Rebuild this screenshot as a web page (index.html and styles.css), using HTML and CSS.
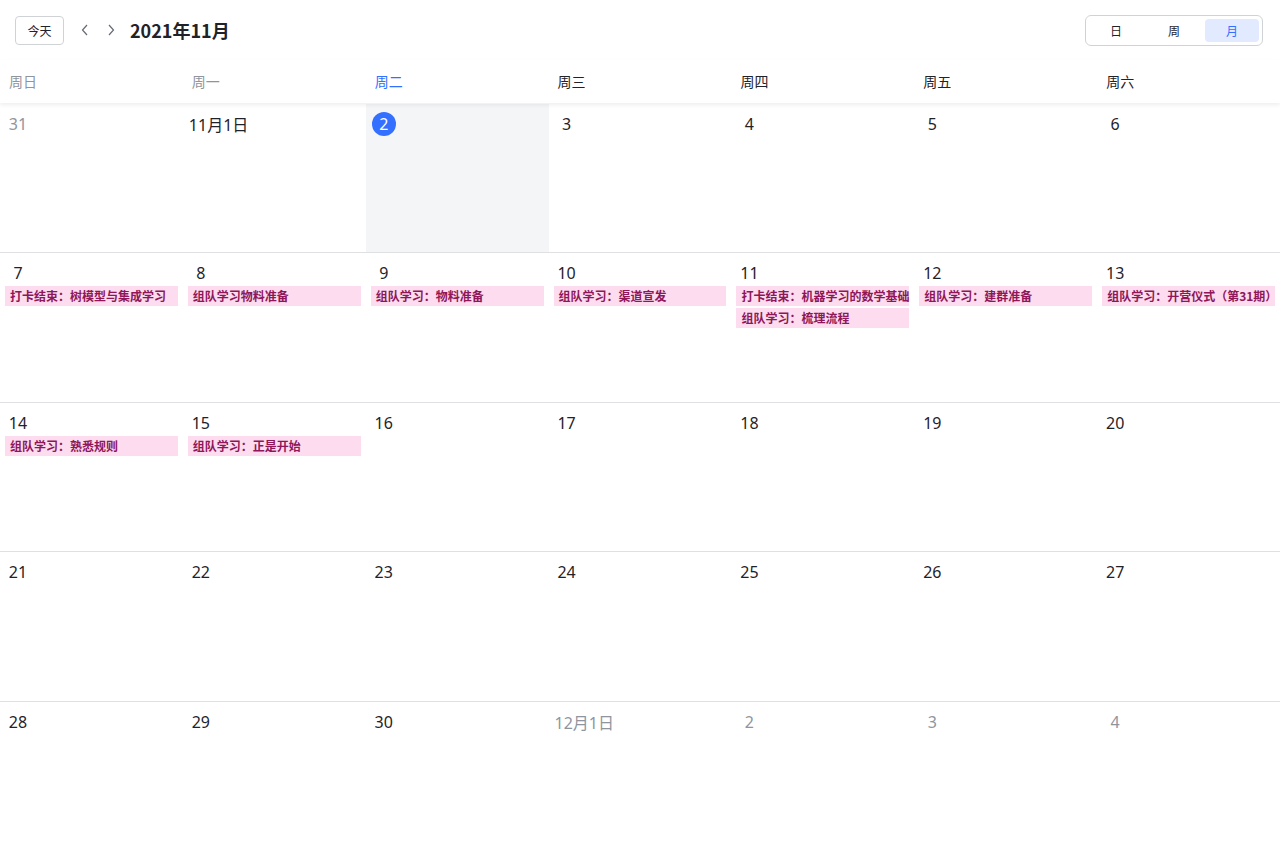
FILE: index.html
```html
<!DOCTYPE html>
<html lang="zh-CN">
<head>
<meta charset="utf-8">
<title>日历</title>
<link rel="stylesheet" href="styles.css">
</head>
<body>
<div class="cal">
  <div class="toolbar">
    <div class="tb-left">
      <button class="today-btn">今天</button>
      <span class="nav">
        <svg width="10" height="12" viewBox="0 0 10 12"><path d="M7 1 L2.5 6 L7 11" fill="none" stroke="#646a73" stroke-width="1.2"/></svg>
      </span>
      <span class="nav">
        <svg width="10" height="12" viewBox="0 0 10 12"><path d="M3 1 L7.5 6 L3 11" fill="none" stroke="#646a73" stroke-width="1.2"/></svg>
      </span>
      <h1 class="title">2021年11月</h1>
    </div>
    <div class="switch">
      <span class="sw">日</span>
      <span class="sw">周</span>
      <span class="sw active">月</span>
    </div>
  </div>
  <div class="weekhead">
    <div class="wd past">周日</div>
    <div class="wd past">周一</div>
    <div class="wd cur">周二</div>
    <div class="wd">周三</div>
    <div class="wd">周四</div>
    <div class="wd">周五</div>
    <div class="wd">周六</div>
  </div>
  <div class="grid">
    <div class="row">
      <div class="cell"><span class="num other">31</span></div>
      <div class="cell"><span class="num">11月1日</span></div>
      <div class="cell todaycell"><span class="num today">2</span></div>
      <div class="cell"><span class="num">3</span></div>
      <div class="cell"><span class="num">4</span></div>
      <div class="cell"><span class="num">5</span></div>
      <div class="cell"><span class="num">6</span></div>
    </div>
    <div class="row">
      <div class="cell"><span class="num">7</span><div class="ev">打卡结束：树模型与集成学习</div></div>
      <div class="cell"><span class="num">8</span><div class="ev">组队学习物料准备</div></div>
      <div class="cell"><span class="num">9</span><div class="ev">组队学习：物料准备</div></div>
      <div class="cell"><span class="num">10</span><div class="ev">组队学习：渠道宣发</div></div>
      <div class="cell"><span class="num">11</span><div class="ev">打卡结束：机器学习的数学基础</div><div class="ev">组队学习：梳理流程</div></div>
      <div class="cell"><span class="num">12</span><div class="ev">组队学习：建群准备</div></div>
      <div class="cell"><span class="num">13</span><div class="ev">组队学习：开营仪式（第31期）</div></div>
    </div>
    <div class="row">
      <div class="cell"><span class="num">14</span><div class="ev">组队学习：熟悉规则</div></div>
      <div class="cell"><span class="num">15</span><div class="ev">组队学习：正是开始</div></div>
      <div class="cell"><span class="num">16</span></div>
      <div class="cell"><span class="num">17</span></div>
      <div class="cell"><span class="num">18</span></div>
      <div class="cell"><span class="num">19</span></div>
      <div class="cell"><span class="num">20</span></div>
    </div>
    <div class="row">
      <div class="cell"><span class="num">21</span></div>
      <div class="cell"><span class="num">22</span></div>
      <div class="cell"><span class="num">23</span></div>
      <div class="cell"><span class="num">24</span></div>
      <div class="cell"><span class="num">25</span></div>
      <div class="cell"><span class="num">26</span></div>
      <div class="cell"><span class="num">27</span></div>
    </div>
    <div class="row">
      <div class="cell"><span class="num">28</span></div>
      <div class="cell"><span class="num">29</span></div>
      <div class="cell"><span class="num">30</span></div>
      <div class="cell"><span class="num other">12月1日</span></div>
      <div class="cell"><span class="num other">2</span></div>
      <div class="cell"><span class="num other">3</span></div>
      <div class="cell"><span class="num other">4</span></div>
    </div>
  </div>
</div>
</body>
</html>
```
FILE: styles.css
```css
* { box-sizing: border-box; }
html, body { margin: 0; padding: 0; background: #fff; }
body {
  font-family: "Noto Sans", "Noto Sans CJK SC", sans-serif;
  color: #1f2329;
  overflow: hidden;
  width: 1280px;
  height: 850px;
}
.cal {
  width: 1280px;
  height: 850px;
  display: flex;
  flex-direction: column;
}
.toolbar {
  height: 60px;
  flex: none;
  display: flex;
  align-items: center;
  justify-content: space-between;
  padding: 0 17px 0 15px;
}
.tb-left {
  display: flex;
  align-items: center;
}
.today-btn {
  width: 49px;
  height: 29px;
  border: 1px solid #d0d3d6;
  border-radius: 4px;
  background: #fff;
  font-family: "Noto Sans CJK SC", sans-serif;
  font-size: 12px;
  color: #1f2329;
  padding: 0;
  margin-right: 13px;
}
.nav {
  width: 16px;
  height: 16px;
  display: flex;
  align-items: center;
  justify-content: center;
  margin-right: 10px;
}
.nav:last-of-type { margin-right: 11px; }
.title {
  margin: 0;
  font-family: "Noto Sans CJK SC", sans-serif;
  font-size: 18px;
  font-weight: 700;
  color: #1f2329;
  line-height: 1;
}
.switch {
  display: flex;
  gap: 4px;
  padding: 3px;
  border: 1px solid #d0d3d6;
  border-radius: 6px;
  height: 31px;
}
.sw {
  width: 54px;
  height: 23px;
  display: flex;
  align-items: center;
  justify-content: center;
  font-family: "Noto Sans CJK SC", sans-serif;
  font-size: 12px;
  color: #1f2329;
  border-radius: 4px;
}
.sw.active {
  background: #e1eaff;
  color: #3370ff;
}
.weekhead {
  height: 43px;
  flex: none;
  display: grid;
  grid-template-columns: repeat(7, 1fr);
  box-shadow: 0 2px 4px rgba(31, 35, 41, 0.08);
  position: relative;
  z-index: 1;
}
.wd {
  padding: 11px 0 0 9px;
  font-family: "Noto Sans CJK SC", sans-serif;
  font-size: 14px;
  color: #1f2329;
}
.wd.past { color: #8f959e; }
.wd.cur { color: #3370ff; }
.grid {
  flex: 1;
  display: grid;
  grid-template-rows: repeat(5, 1fr);
}
.row {
  display: grid;
  grid-template-columns: repeat(7, 1fr);
  border-top: 1px solid #dee0e3;
}
.row:first-child { border-top: none; padding-top: 1px; }
.cell {
  padding: 8px 5px 0;
  display: flex;
  flex-direction: column;
  align-items: flex-start;
  gap: 2px;
  min-width: 0;
}
.todaycell { background: #f4f5f7; }
.num {
  min-width: 24px;
  height: 24px;
  margin-left: 1px;
  display: inline-flex;
  align-items: center;
  justify-content: center;
  font-family: "Noto Sans", "Noto Sans CJK SC", sans-serif;
  font-size: 16px;
  color: #1f2329;
  margin-bottom: -1px;
}
.num.other { color: #8f959e; }
.num.today {
  background: #3370ff;
  color: #fff;
  border-radius: 50%;
}
.ev {
  align-self: stretch;
  height: 20px;
  background: #fddcef;
  color: #8e1659;
  font-family: "Noto Sans CJK SC", sans-serif;
  font-size: 12px;
  font-weight: 700;
  line-height: 20px;
  padding: 0 0 0 5px;
  white-space: nowrap;
}
```
